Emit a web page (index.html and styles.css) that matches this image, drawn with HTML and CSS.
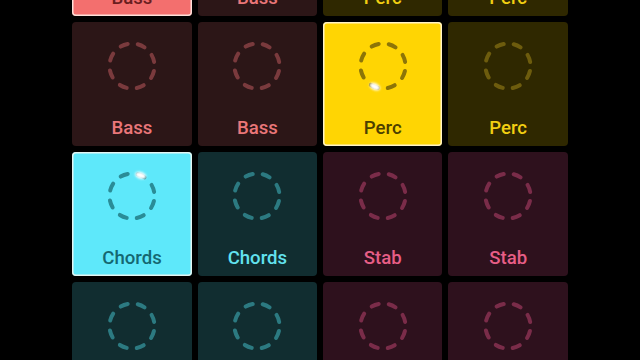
FILE: index.html
```html
<!DOCTYPE html>
<html>
<head>
<meta charset="utf-8">
<link rel="stylesheet" href="styles.css">
</head>
<body>
<svg width="0" height="0" class="defs">
  <defs>
    <filter id="glow" x="-2" y="-2" width="5" height="5">
      <feGaussianBlur stdDeviation="1"/>
    </filter>
  </defs>
</svg>
<main class="pads">
  <div class="pad bass active">
    <svg class="ring" viewBox="0 0 50 50"><circle cx="25" cy="25" r="22.5"/></svg>
    <span class="label">Bass</span>
  </div>
  <div class="pad bass">
    <svg class="ring" viewBox="0 0 50 50"><circle cx="25" cy="25" r="22.5"/></svg>
    <span class="label">Bass</span>
  </div>
  <div class="pad perc">
    <svg class="ring" viewBox="0 0 50 50"><circle cx="25" cy="25" r="22.5"/></svg>
    <span class="label">Perc</span>
  </div>
  <div class="pad perc">
    <svg class="ring" viewBox="0 0 50 50"><circle cx="25" cy="25" r="22.5"/></svg>
    <span class="label">Perc</span>
  </div>

  <div class="pad bass">
    <svg class="ring" viewBox="0 0 50 50"><circle cx="25" cy="25" r="22.5"/></svg>
    <span class="label">Bass</span>
  </div>
  <div class="pad bass">
    <svg class="ring" viewBox="0 0 50 50"><circle cx="25" cy="25" r="22.5"/></svg>
    <span class="label">Bass</span>
  </div>
  <div class="pad perc active">
    <svg class="ring" viewBox="0 0 50 50"><circle cx="25" cy="25" r="22.5"/><ellipse class="spot" cx="16.8" cy="45.6" rx="5.6" ry="3.4" transform="rotate(26 16.8 45.6)"/></svg>
    <span class="label">Perc</span>
  </div>
  <div class="pad perc">
    <svg class="ring" viewBox="0 0 50 50"><circle cx="25" cy="25" r="22.5"/></svg>
    <span class="label">Perc</span>
  </div>

  <div class="pad chords active">
    <svg class="ring" viewBox="0 0 50 50"><circle cx="25" cy="25" r="22.5"/><ellipse class="spot" cx="33.6" cy="4.4" rx="5.6" ry="3.4" transform="rotate(18 33.6 4.4)"/></svg>
    <span class="label">Chords</span>
  </div>
  <div class="pad chords">
    <svg class="ring" viewBox="0 0 50 50"><circle cx="25" cy="25" r="22.5"/></svg>
    <span class="label">Chords</span>
  </div>
  <div class="pad stab">
    <svg class="ring" viewBox="0 0 50 50"><circle cx="25" cy="25" r="22.5"/></svg>
    <span class="label">Stab</span>
  </div>
  <div class="pad stab">
    <svg class="ring" viewBox="0 0 50 50"><circle cx="25" cy="25" r="22.5"/></svg>
    <span class="label">Stab</span>
  </div>

  <div class="pad chords">
    <svg class="ring" viewBox="0 0 50 50"><circle cx="25" cy="25" r="22.5"/></svg>
    <span class="label">Chords</span>
  </div>
  <div class="pad chords">
    <svg class="ring" viewBox="0 0 50 50"><circle cx="25" cy="25" r="22.5"/></svg>
    <span class="label">Chords</span>
  </div>
  <div class="pad stab">
    <svg class="ring" viewBox="0 0 50 50"><circle cx="25" cy="25" r="22.5"/></svg>
    <span class="label">Stab</span>
  </div>
  <div class="pad stab">
    <svg class="ring" viewBox="0 0 50 50"><circle cx="25" cy="25" r="22.5"/></svg>
    <span class="label">Stab</span>
  </div>
</main>
</body>
</html>
```

FILE: styles.css
```css
html, body {
  margin: 0;
  padding: 0;
  background: #000;
  overflow: hidden;
}

body {
  width: 640px;
  height: 360px;
  font-family: Roboto, "Noto Sans", "Liberation Sans", sans-serif;
}

.defs {
  position: absolute;
  width: 0;
  height: 0;
}

.pads {
  display: grid;
  grid-template-columns: repeat(4, 119.4px);
  grid-auto-rows: 124px;
  column-gap: 6px;
  row-gap: 6px;
  margin-top: -108px;
  padding-left: 72.3px;
}

.pad {
  display: flex;
  flex-direction: column;
  align-items: center;
  border-radius: 4px;
  background: var(--bg);
  color: var(--fg);
}

.ring {
  width: 50px;
  height: 50px;
  margin-top: 19px;
  overflow: visible;
}

.ring circle {
  fill: none;
  stroke: var(--ring);
  stroke-width: 4;
  stroke-linecap: round;
  stroke-dasharray: 7.4 10.27;
  stroke-dashoffset: 12.5;
}

.spot {
  fill: #ffffff;
  filter: url(#glow);
}

.label {
  margin-top: 25.7px;
  font-size: 18.6px;
  line-height: 22px;
  font-weight: 500;
}

.active {
  box-shadow: inset 0 0 0 1.5px rgba(255, 248, 240, 0.82);
}

.bass {
  --bg: #2c1617;
  --fg: #ea7679;
  --ring: #7a3a3d;
}
.bass.active {
  --bg: #f36f6e;
  --fg: #6a1e1f;
  --ring: #a24446;
}

.perc {
  --bg: #2f2800;
  --fg: #f2cf12;
  --ring: #6d5c0d;
}
.perc.active {
  --bg: #ffd503;
  --fg: #4c3f00;
  --ring: #8c7508;
}

.chords {
  --bg: #112d30;
  --fg: #62e2ef;
  --ring: #2c7a81;
}
.chords.active {
  --bg: #5ee8fa;
  --fg: #156771;
  --ring: #2a8c97;
}

.stab {
  --bg: #2e111d;
  --fg: #e75e86;
  --ring: #7a2c49;
}
```
